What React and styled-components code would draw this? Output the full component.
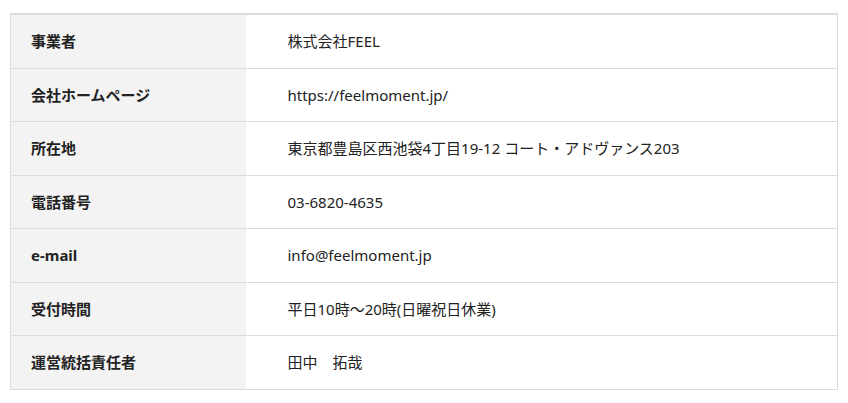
import React from 'react';
import styled, { createGlobalStyle } from 'styled-components';

const GlobalStyle = createGlobalStyle`
  html, body {
    margin: 0;
    padding: 0;
    background: #fff;
  }
  body {
    font-family: "Noto Sans", "Noto Sans CJK JP", sans-serif;
    color: #222;
  }
`;

const Wrapper = styled.div`
  padding: 13px 10px 0;
`;

const Table = styled.table`
  width: 100%;
  border-collapse: collapse;
  border-top: 2px solid #dcdcdc;
  border-left: 1px solid #dcdcdc;
  border-right: 1px solid #dcdcdc;
  font-size: 15px;
`;

const Row = styled.tr`
  border-bottom: 1px solid #dcdcdc;
`;

const Label = styled.th`
  width: 235px;
  box-sizing: border-box;
  padding: 14px 20px;
  line-height: 24.5px;
  background: #f3f3f3;
  text-align: left;
  font-weight: 700;
  color: #222;
  vertical-align: middle;
`;

const Value = styled.td`
  padding: 14px 20px 14px 42px;
  line-height: 24.5px;
  font-weight: 400;
  color: #222;
  vertical-align: middle;
`;

const rows = [
  ['事業者', '株式会社FEEL'],
  ['会社ホームページ', 'https://feelmoment.jp/'],
  ['所在地', '東京都豊島区西池袋4丁目19-12 コート・アドヴァンス203'],
  ['電話番号', '03-6820-4635'],
  ['e-mail', 'info@feelmoment.jp'],
  ['受付時間', '平日10時〜20時(日曜祝日休業)'],
  ['運営統括責任者', '田中　拓哉'],
];

export default function App() {
  return (
    <>
      <GlobalStyle />
      <Wrapper>
        <Table>
          <tbody>
            {rows.map(([label, value]) => (
              <Row key={label}>
                <Label>{label}</Label>
                <Value>{value}</Value>
              </Row>
            ))}
          </tbody>
        </Table>
      </Wrapper>
    </>
  );
}
